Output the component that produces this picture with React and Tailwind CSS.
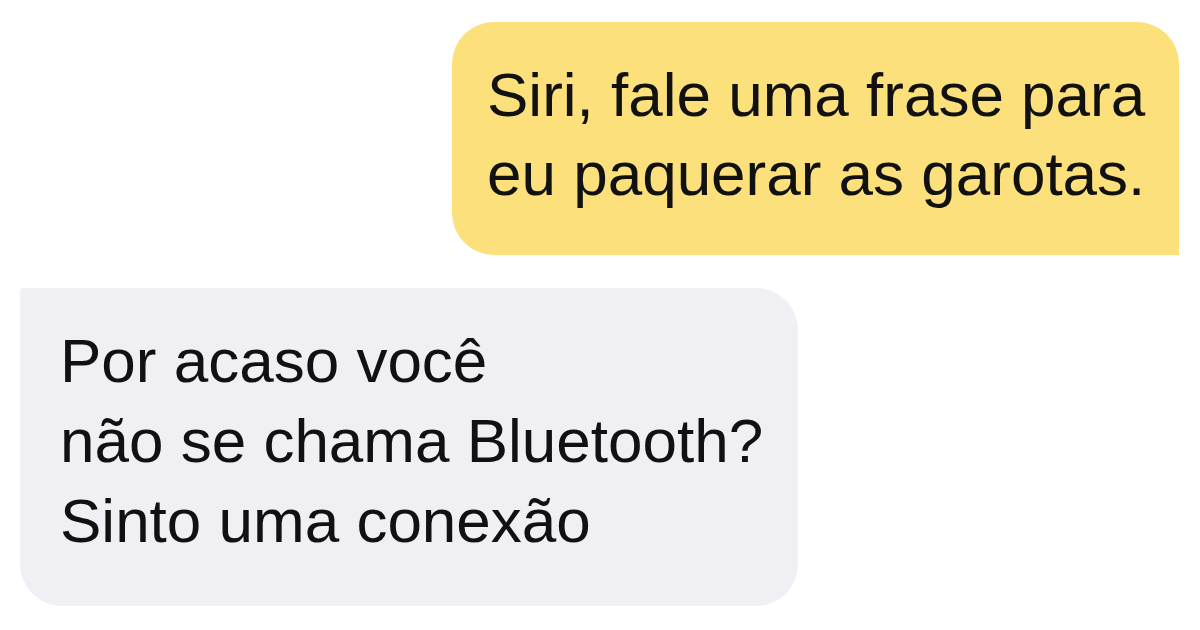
export default function App() {
  return (
    <div
      className="w-[1200px] h-[630px] bg-white flex flex-col pt-[22px] overflow-hidden text-[#111111]"
      style={{ fontFamily: '"Liberation Sans", Arial, sans-serif' }}
    >
      <div className="self-end mr-[21px] w-[727px] h-[233px] bg-[#fbe07c] rounded-tl-[42px] rounded-tr-[42px] rounded-bl-[42px] rounded-br-[0px] pl-[35px] pt-[33px] text-[62px] leading-[79px] whitespace-nowrap">
        Siri, fale uma frase para
        <br />
        eu paquerar as garotas.
      </div>
      <div className="mt-[33px] ml-[20px] w-[778px] h-[318px] bg-[#efeff4] rounded-tl-[4px] rounded-tr-[42px] rounded-bl-[42px] rounded-br-[42px] pl-[40px] pt-[33px] text-[62px] leading-[80px] whitespace-nowrap">
        Por acaso você
        <br />
        não se chama Bluetooth?
        <br />
        Sinto uma conexão
      </div>
    </div>
  );
}
